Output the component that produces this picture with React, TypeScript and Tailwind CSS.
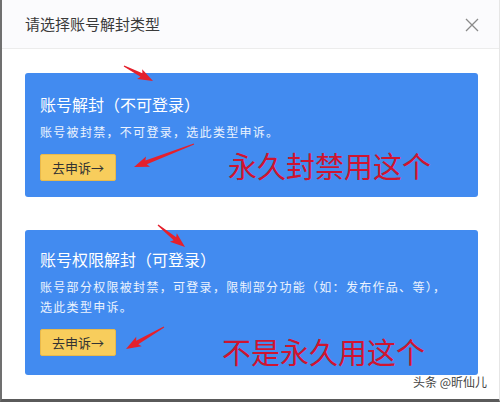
import React from "react"

const font = { fontFamily: '"Noto Sans CJK SC", "Noto Sans", sans-serif' }

function Arrow({ tail, tip }: { tail: [number, number]; tip: [number, number] }) {
  const [x1, y1] = tail
  const [x2, y2] = tip
  const dx = x2 - x1
  const dy = y2 - y1
  const len = Math.hypot(dx, dy)
  const ux = dx / len
  const uy = dy / len
  const nx = -uy
  const ny = ux
  const head = 13
  const bx = x2 - ux * head
  const by = y2 - uy * head
  const p = (x: number, y: number) => `${x.toFixed(1)},${y.toFixed(1)}`
  const pts = [
    p(x1 + nx * 0.6, y1 + ny * 0.6),
    p(bx + nx * 2, by + ny * 2),
    p(bx - ux * 2 + nx * 5.5, by - uy * 2 + ny * 5.5),
    p(x2, y2),
    p(bx - ux * 2 - nx * 5.5, by - uy * 2 - ny * 5.5),
    p(bx - nx * 2, by - ny * 2),
    p(x1 - nx * 0.6, y1 - ny * 0.6),
  ].join(" ")
  return <polygon points={pts} fill="#e5202c" />
}

function Card({
  title,
  lines,
  note,
  className,
  noteClass,
}: {
  title: string
  lines: string[]
  note: string
  className: string
  noteClass: string
}) {
  return (
    <div className={`relative rounded-[3px] bg-[#428bf0] pl-[15px] pr-4 ${className}`}>
      <div className="text-[16px] leading-[22px] text-white">{title}</div>
      <div className="mt-[7px] text-[12px] leading-[20px] tracking-[1.3px] text-white/90">
        {lines.map((l) => (
          <div key={l}>{l}</div>
        ))}
      </div>
      <button className="mt-[12px] flex h-[27px] w-[76px] items-center justify-center rounded-[2px] border border-[#e9b94a] bg-[#f8cd5c] text-[13px] text-[#333]">
        去申诉→
      </button>
      <div className={`absolute text-[29px] leading-[34px] text-[#cf1430] ${noteClass}`}>{note}</div>
    </div>
  )
}

export default function App() {
  return (
    <div
      className="relative h-[402px] w-[500px] overflow-hidden border-b-[3px] border-l-2 border-r border-b-[#5a5a5a] border-l-[#707070] border-r-[#e6e6e6] bg-white"
      style={font}
    >
      {/* Header */}
      <header className="flex h-[49px] items-center justify-between border-b border-[#ececec] bg-[#fbfbfd] pl-[23px] pr-[20px]">
        <h1 className="text-[15px] text-[#3a3a3a]">请选择账号解封类型</h1>
        <svg width="14" height="14" viewBox="0 0 14 14" className="mt-[1px]">
          <path d="M1 1 L13 13 M13 1 L1 13" stroke="#8a8a8a" strokeWidth="1.3" />
        </svg>
      </header>

      {/* Cards */}
      <div className="flex flex-col gap-[33px] pl-[23px] pr-[21px] pt-[24px]">
        <Card
          className="h-[124px] pt-[20px]"
          title="账号解封（不可登录）"
          lines={["账号被封禁，不可登录，选此类型申诉。"]}
          note="永久封禁用这个"
          noteClass="left-[203px] bottom-[15px]"
        />
        <Card
          className="h-[145px] pt-[18px]"
          title="账号权限解封（可登录）"
          lines={["账号部分权限被封禁，可登录，限制部分功能（如：发布作品、等），", "选此类型申诉。"]}
          note="不是永久用这个"
          noteClass="left-[197px] bottom-[7px]"
        />
      </div>

      {/* Annotation arrows */}
      <svg className="pointer-events-none absolute left-[-2px] top-0" width="500" height="402">
        <Arrow tail={[124, 66]} tip={[153, 81]} />
        <Arrow tail={[194, 144]} tip={[134, 167]} />
        <Arrow tail={[158, 225]} tip={[185, 247]} />
        <Arrow tail={[164, 327]} tip={[126, 349]} />
      </svg>

      <div className="absolute bottom-[8px] right-[12px] text-[12px] text-[#444] [text-shadow:0_0_2px_#fff]">
        头条 @昕仙儿
      </div>
    </div>
  )
}
